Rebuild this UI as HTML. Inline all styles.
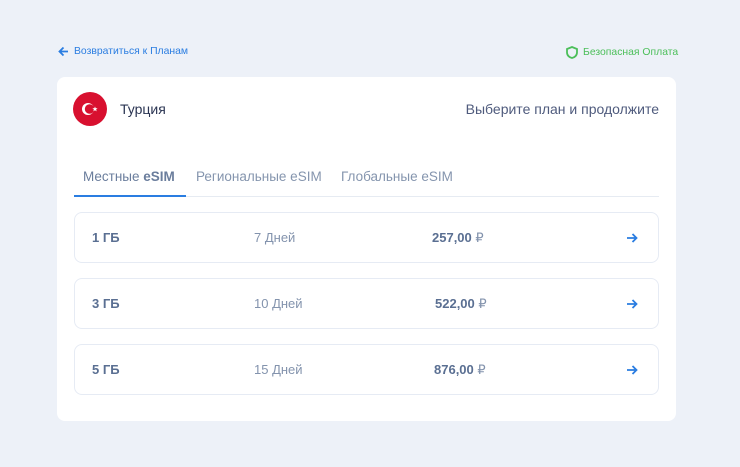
<!DOCTYPE html>
<html><head><meta charset="utf-8"><style>
*{margin:0;padding:0;box-sizing:border-box}
body{width:740px;height:467px;background:#edf1f8;font-family:"Liberation Sans",sans-serif;position:relative;overflow:hidden}
.a{position:absolute}
.back{left:58px;top:46px;font-size:10.4px;color:#2a7de1;display:flex;align-items:center;gap:5px}
.sec{left:566px;top:46px;font-size:10.4px;color:#4cbf5a;display:flex;align-items:center;gap:5px}
.card{left:57px;top:77px;width:619px;height:344px;background:#fff;border-radius:8px}
.row{position:absolute;left:17px;width:585px;height:51px;border:1.5px solid #e6ebf4;border-radius:8px}
.row span{position:absolute;top:17px;font-size:13px;color:#5a6f92}
.gb{left:17px;font-weight:bold}
.d{left:179px;color:#8393ad!important}
.p{font-weight:bold}
.p i{font-style:normal;font-weight:normal;color:#8393ad}
.ar{left:551px;top:19px!important}
</style></head><body>
<div class="a back"><svg width="11" height="11" viewBox="0 0 11 11"><path d="M10 5.5H1.5M5.5 1.5L1.5 5.5L5.5 9.5" stroke="#2a7de1" stroke-width="1.8" fill="none"/></svg>Возвратиться к Планам</div>
<div class="a sec"><svg width="12" height="13" viewBox="0 0 12 13"><path d="M6 1L11 3V6.5C11 9.5 8.5 11.5 6 12C3.5 11.5 1 9.5 1 6.5V3Z" stroke="#4cbf5a" stroke-width="1.8" fill="none"/></svg>Безопасная Оплата</div>
<div class="a card">
 <svg class="a" style="left:16px;top:15px" width="34" height="34" viewBox="0 0 34 34"><circle cx="17" cy="17" r="17" fill="#d8102f"/><circle cx="15" cy="17" r="6" fill="#fff"/><circle cx="16.6" cy="17" r="4.8" fill="#d8102f"/><polygon points="22,14.5 22.7,16.3 24.6,16.3 23.1,17.5 23.7,19.4 22,18.2 20.3,19.4 20.9,17.5 19.4,16.3 21.3,16.3" fill="#fff"/></svg>
 <div class="a" style="left:63px;top:24px;font-size:14px;color:#2a3452">Турция</div>
 <div class="a" style="right:17px;top:24px;font-size:14px;color:#4f5b7d">Выберите план и продолжите</div>
 <div class="a" style="left:26px;top:92px;font-size:13.5px;color:#6a7d9c">Местные <b>eSIM</b></div>
 <div class="a" style="left:139px;top:92px;font-size:13.5px;color:#8595ae">Региональные eSIM</div>
 <div class="a" style="left:284px;top:92px;font-size:13.5px;color:#8595ae">Глобальные eSIM</div>
 <div class="a" style="left:17px;top:119px;width:585px;height:1px;background:#e6ebf2"></div>
 <div class="a" style="left:17px;top:118px;width:112px;height:2px;background:#2a7de1"></div>
 <div class="row" style="top:135px"><span class="gb">1 ГБ</span><span class="d">7 Дней</span><span class="p" style="left:357px">257,00 <i>₽</i></span><span class="ar"><svg width="12" height="12" viewBox="0 0 12 12"><path d="M1 6H10.5M6.5 2L10.5 6L6.5 10" stroke="#2a7de1" stroke-width="1.8" fill="none"/></svg></span></div>
 <div class="row" style="top:201px"><span class="gb">3 ГБ</span><span class="d">10 Дней</span><span class="p" style="left:360px">522,00 <i>₽</i></span><span class="ar"><svg width="12" height="12" viewBox="0 0 12 12"><path d="M1 6H10.5M6.5 2L10.5 6L6.5 10" stroke="#2a7de1" stroke-width="1.8" fill="none"/></svg></span></div>
 <div class="row" style="top:267px"><span class="gb">5 ГБ</span><span class="d">15 Дней</span><span class="p" style="left:359px">876,00 <i>₽</i></span><span class="ar"><svg width="12" height="12" viewBox="0 0 12 12"><path d="M1 6H10.5M6.5 2L10.5 6L6.5 10" stroke="#2a7de1" stroke-width="1.8" fill="none"/></svg></span></div>
</div>
</body></html>
